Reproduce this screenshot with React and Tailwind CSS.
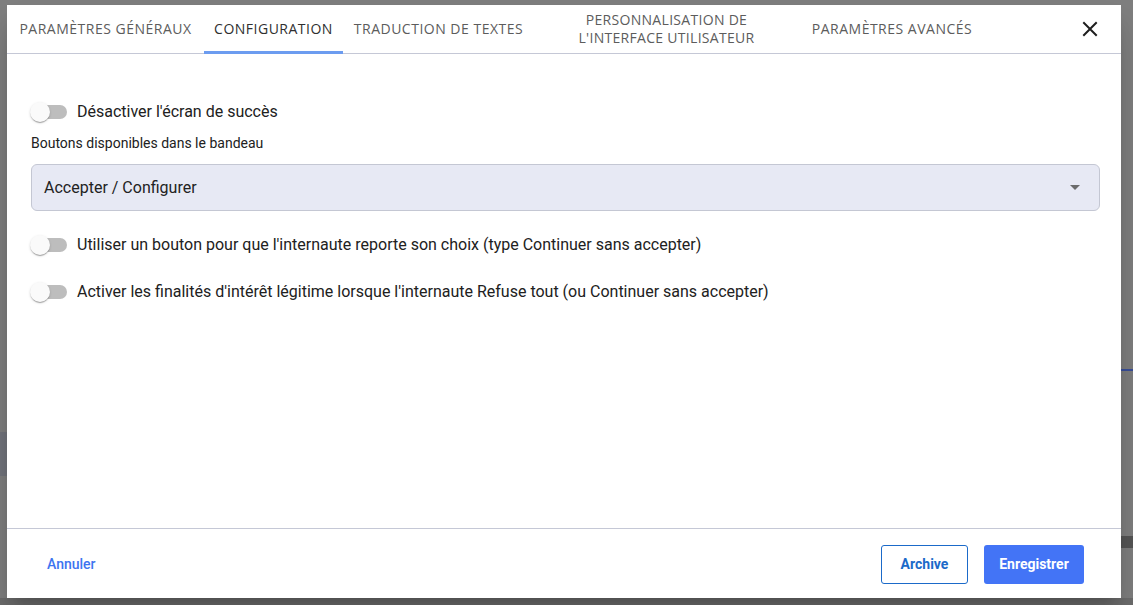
import React from "react";

function Switch() {
  return (
    <div className="relative w-[37px] h-[20px] shrink-0">
      <div className="absolute left-[3px] top-[3px] w-[34px] h-[14px] rounded-full bg-[#bdbdbd]" />
      <div className="absolute left-0 top-0 w-[20px] h-[20px] rounded-full bg-[#fafafa] shadow-[0_2px_1px_-1px_rgba(0,0,0,0.2),0_1px_1px_0_rgba(0,0,0,0.14),0_1px_3px_0_rgba(0,0,0,0.12)]" />
    </div>
  );
}

function ToggleRow({ label, className = "" }) {
  return (
    <div className={"flex items-center h-[38px] gap-[10px] -ml-[1px] " + className}>
      <Switch />
      <span className="text-[16px] text-[#212121] leading-[20px]">{label}</span>
    </div>
  );
}

const tabs = [
  { label: "PARAMÈTRES GÉNÉRAUX", w: "w-[197px]" },
  { label: "CONFIGURATION", w: "w-[139px]", active: true },
  { label: "TRADUCTION DE TEXTES", w: "w-[191px]" },
  { label: "two", w: "w-[265px]" },
  { label: "PARAMÈTRES AVANCÉS", w: "w-[186px]" },
];

export default function App() {
  return (
    <div className="relative w-full h-[605px] bg-[#7f7f7f] overflow-hidden" style={{ fontFamily: "Roboto, 'Liberation Sans', sans-serif" }}>
      {/* faint backdrop content */}
      <div className="absolute left-0 top-[432px] w-[7px] h-[44px] bg-[#72747c]" />
      <div className="absolute right-0 top-[369px] w-[12px] h-[2px] bg-[#3a4f9a]" />
      <div className="absolute right-0 top-[536px] w-[12px] h-[12px] bg-[#555]" />
      <div className="absolute left-0 right-0 top-[598px] h-[7px] bg-[#6d6d6d]" />

      <div className="absolute left-[7px] top-[5px] w-[1114px] h-[593px] bg-white flex flex-col shadow-[0_11px_15px_-7px_rgba(0,0,0,0.2),0_24px_38px_3px_rgba(0,0,0,0.14)]">
        {/* Tabs header */}
        <div className="flex items-stretch h-[49px] border-b border-[#c5c8d6] shrink-0">
          <div className="flex items-stretch" style={{ fontFamily: "'Open Sans', 'Liberation Sans', sans-serif" }}>
            {tabs.map((t, i) => (
              <div
                key={i}
                className={
                  "relative flex items-center justify-center text-center text-[14px] tracking-[0.5px] leading-[18px] " +
                  t.w +
                  (t.active ? " text-[#2f2f2f]" : " text-[#5c5c5c]")
                }
              >
                {t.label === "two" ? (
                  <span className="tracking-[0.3px]">
                    PERSONNALISATION DE
                    <br />
                    L'INTERFACE UTILISATEUR
                  </span>
                ) : (
                  <span>{t.label}</span>
                )}
                {t.active && <div className="absolute left-0 right-0 bottom-[-1px] h-[3px] bg-[#6c9cf0]" />}
              </div>
            ))}
          </div>
          <div className="flex-1" />
          <div className="flex items-center pr-[23px]">
            <svg width="16" height="16" viewBox="0 0 16 16" fill="none" stroke="#1e1e1e" strokeWidth="2" strokeLinecap="square">
              <path d="M2 2 L14 14 M14 2 L2 14" />
            </svg>
          </div>
        </div>

        {/* Body */}
        <div className="flex-1 flex flex-col pl-[24px] pr-[21px] pt-[39px]">
          <ToggleRow label="Désactiver l'écran de succès" />
          <div className="mt-[2px] text-[14px] leading-[20px] text-[#212121]">Boutons disponibles dans le bandeau</div>
          <div className="mt-[11px] h-[47px] rounded-[6px] border border-[#c4c7d3] bg-[#e7e9f4] flex items-center pl-[12px] pr-[19px]">
            <span className="flex-1 text-[16px] text-[#222]">Accepter / Configurer</span>
            <svg width="10" height="5" viewBox="0 0 10 5">
              <path d="M0 0 L10 0 L5 5 Z" fill="#6b6b6b" />
            </svg>
          </div>
          <ToggleRow className="mt-[15px]" label="Utiliser un bouton pour que l'internaute reporte son choix (type Continuer sans accepter)" />
          <ToggleRow className="mt-[9px]" label="Activer les finalités d'intérêt légitime lorsque l'internaute Refuse tout (ou Continuer sans accepter)" />
        </div>

        {/* Footer */}
        <div className="h-[70px] shrink-0 border-t border-[#c5c8d6] flex items-center pt-[2px] pl-[24px] pr-[37px]">
          <button className="px-[16px] h-[36px] text-[14px] font-medium text-[#3d74f0]">Annuler</button>
          <div className="flex-1" />
          <button className="w-[87px] h-[39px] rounded-[3px] border border-[#1b6ac9] text-[14px] font-bold text-[#1b6ac9]">Archive</button>
          <button className="ml-[16px] w-[100px] h-[39px] rounded-[3px] bg-[#4374f6] text-[14px] font-bold text-white">Enregistrer</button>
        </div>
      </div>
    </div>
  );
}
